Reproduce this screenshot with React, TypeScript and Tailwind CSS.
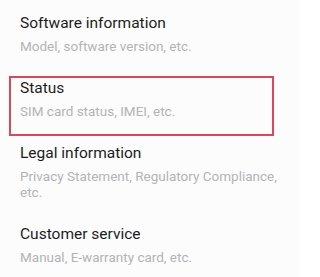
const items = [
  { title: "Software information", sub: "Model, software version, etc." },
  { title: "Status", sub: "SIM card status, IMEI, etc.", marked: true },
  {
    title: "Legal information",
    sub: "Privacy Statement, Regulatory Compliance, etc.",
  },
  { title: "Customer service", sub: "Manual, E-warranty card, etc." },
];

export default function App() {
  return (
    <div className="w-[300px] h-[277px] overflow-hidden bg-[#fcfcfd] font-['Roboto',sans-serif]">
      {items.map((item) => (
        <div key={item.title} className="relative pl-[20px] pr-[20px] py-[11.5px]">
          <div className="text-[15.5px] leading-[22px] text-[#1c1c1c]">{item.title}</div>
          <div className="mt-1 text-[13.5px] leading-[16px] text-[#b4b4b4]">{item.sub}</div>
          {item.marked && (
            <div className="absolute top-[11px] left-[9px] w-[265px] h-[60px] border-2 border-[#d9475a]" />
          )}
        </div>
      ))}
    </div>
  );
}
